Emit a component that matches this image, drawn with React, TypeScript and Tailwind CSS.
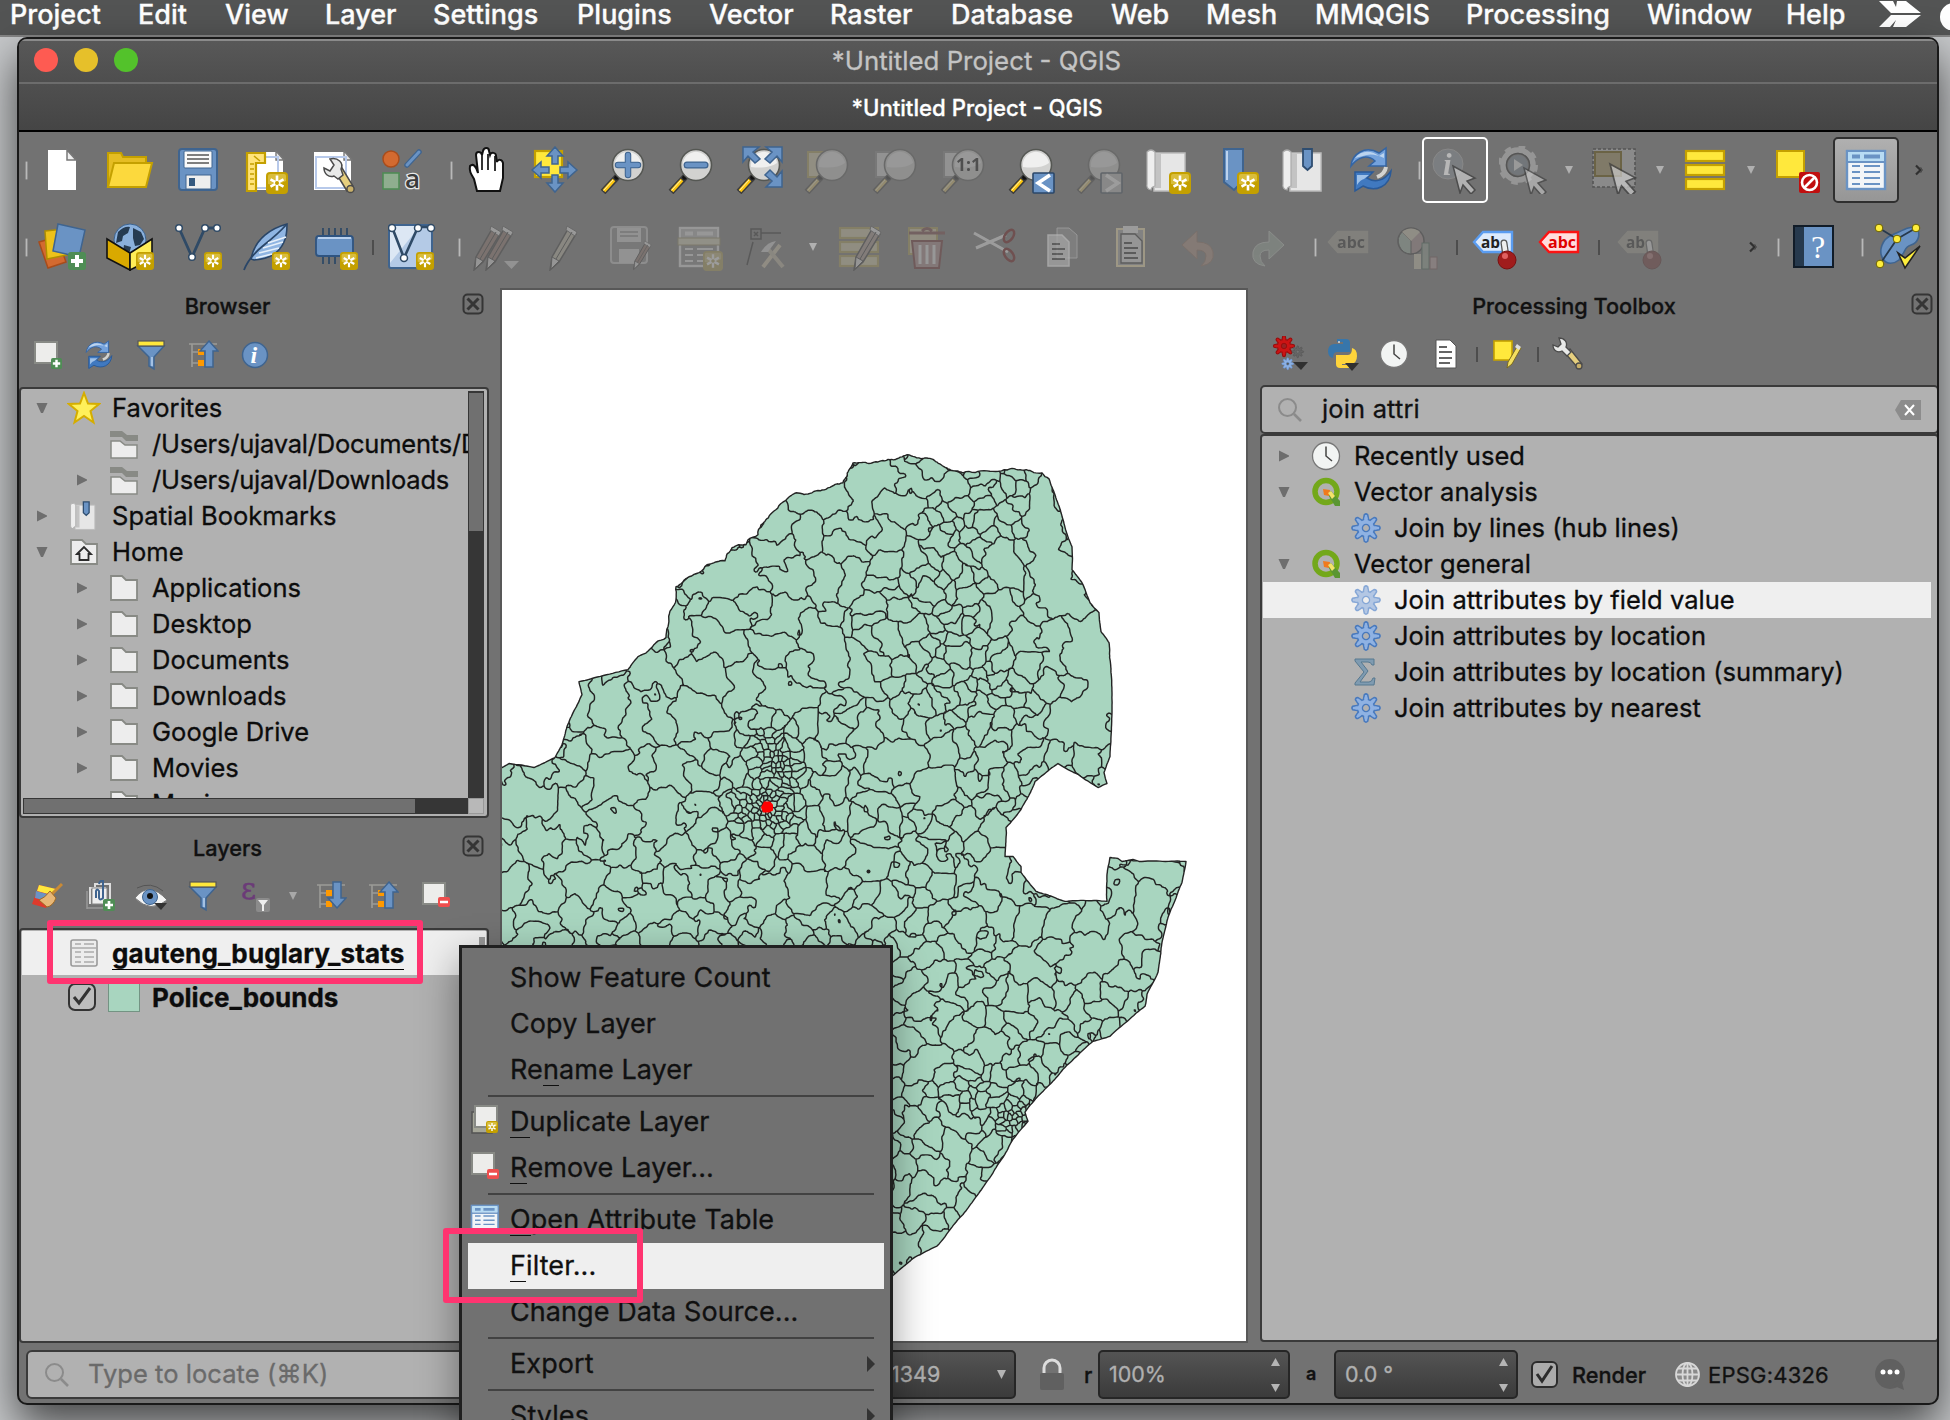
import React from "react";

/* ---------- Map geometry ---------- */

type Pt = [number, number];

function makeRng(seed: number) {
  let s = seed;
  return () => {
    s = (s + 0x6d2b79f5) | 0;
    let t = Math.imul(s ^ (s >>> 15), 1 | s);
    t = (t + Math.imul(t ^ (t >>> 7), 61 | t)) ^ t;
    return ((t ^ (t >>> 14)) >>> 0) / 4294967296;
  };
}

const coast: Pt[] = [
  [490, 770], [502, 768], [509, 764], [534, 768], [555, 758], [562, 745], [567, 727], [582, 695], [579, 682], [628, 670], [638, 657],
  [656, 643], [666, 638], [668, 627], [673, 607], [676, 587], [689, 577], [707, 565], [725, 561], [732, 548], [746, 545],
  [748, 540], [758, 535], [761, 525], [770, 515], [785, 501], [796, 493], [812, 493], [828, 488], [843, 483], [849, 470],
  [853, 463], [881, 461], [909, 455], [925, 458], [948, 469], [963, 473], [987, 471], [1010, 469], [1042, 473], [1049, 479],
  [1061, 513], [1072, 547], [1072, 570], [1082, 583], [1090, 603], [1099, 613], [1101, 632], [1109, 643], [1111, 673],
  [1112, 713], [1111, 737], [1110, 757], [1104, 773], [1107, 784], [1098, 788], [1058, 764], [1035, 782], [1021, 810],
  [1006, 828], [1005, 857], [1013, 857], [1021, 867], [1021, 873], [1036, 892], [1065, 902], [1107, 902], [1107, 875], [1110, 858],
  [1118, 859], [1122, 862], [1133, 860], [1139, 862], [1186, 862], [1182, 883], [1168, 918], [1162, 943], [1158, 973], [1147, 995],
  [1145, 1007], [1110, 1037], [1093, 1042], [1063, 1070], [1040, 1095], [1025, 1113], [1028, 1122], [1013, 1140],
  [995, 1170], [973, 1202], [952, 1228], [937, 1247], [915, 1258], [892, 1277], [860, 1290], [490, 1290],
];

/* Hand-placed districts: each group of points forms one district. */
const districts: Pt[][] = [
  [[862, 475], [868, 492], [858, 508], [889, 478]], [[910, 470], [927, 483], [945, 490], [915, 490], [955, 482]],
  [[1040, 485], [1040, 500], [1036, 520], [1052, 520], [1034, 540], [1055, 545], [1042, 560], [1060, 570], [1048, 590], [1070, 590], [1056, 606], [1080, 606], [1048, 573]],
  [[892, 505], [905, 515], [916, 505]], [[800, 500], [818, 498], [834, 494]], [[776, 515], [772, 532]], [[806, 522], [810, 540], [812, 552]],
  [[840, 525], [862, 528]], [[725, 568], [700, 580], [745, 560], [738, 585], [715, 592], [752, 582]], [[765, 553], [785, 555]],
  [[775, 575], [797, 573], [778, 590], [795, 588]], [[821, 570], [830, 585], [824, 594]], [[855, 578], [848, 590], [857, 562]],
  [[838, 548], [858, 550]], [[880, 565], [890, 560]], [[995, 555], [1010, 562], [1000, 578], [1014, 580], [1003, 548]],
  [[884, 535], [890, 545]], [[678, 615], [682, 632], [680, 645]], [[704, 632], [720, 640], [706, 650], [734, 645]],
  [[775, 605], [795, 608], [770, 620], [790, 625]], [[720, 612], [738, 618]], [[765, 640], [785, 645], [778, 655]],
  [[808, 625], [818, 640], [828, 655], [835, 675], [820, 662]], [[645, 660], [655, 672], [642, 680], [665, 680]],
  [[690, 662], [708, 668], [715, 683], [700, 682]], [[740, 672], [748, 688], [742, 700]], [[775, 680], [792, 692], [808, 700], [785, 705]],
  [[855, 655], [862, 672], [868, 688], [852, 668]], [[602, 690], [618, 690], [605, 710], [620, 712]], [[583, 692], [582, 712]],
  [[639, 695], [638, 715], [640, 735]], [[661, 705], [664, 722]], [[685, 705], [700, 712], [712, 718], [690, 722]],
  [[1095, 630], [1080, 630], [1085, 650], [1100, 655], [1098, 675], [1082, 668], [1100, 695], [1085, 705], [1098, 715], [1070, 715], [1060, 718], [1085, 725], [1065, 735], [1098, 738]],
  [[1050, 625], [1045, 640], [1056, 640], [1050, 660]], [[995, 600], [1005, 612], [998, 625]], [[1020, 630], [1030, 645], [1018, 645]],
  [[880, 715], [895, 722], [900, 732]], [[885, 750], [905, 748], [910, 765], [893, 770]], [[920, 785], [938, 785], [930, 800]],
  [[605, 775], [620, 770], [600, 795], [630, 785]], [[668, 765], [680, 758], [662, 778], [682, 782]],
  [[512, 792], [530, 792], [540, 800], [510, 808]], [[566, 812], [574, 824], [560, 830]], [[612, 815], [612, 835], [628, 822]],
  [[648, 800], [668, 802], [650, 825], [665, 830]], [[530, 840], [548, 838], [535, 855]], [[575, 875], [592, 872], [575, 890], [592, 890]],
  [[535, 880], [538, 897], [550, 900]], [[535, 918], [555, 920]], [[632, 905], [655, 905], [640, 920]], [[755, 890], [770, 888], [762, 908]],
  [[800, 880], [815, 878], [805, 900], [822, 895]], [[866, 862], [880, 862], [874, 875]], [[985, 870], [1000, 868], [998, 885], [1012, 890]],
  [[1145, 870], [1160, 870], [1172, 876]], [[1120, 878], [1118, 898]], [[1148, 898], [1158, 910], [1150, 925]], [[1122, 925], [1110, 945], [1085, 950], [1078, 965], [1098, 960]],
  [[1050, 925], [1060, 922]], [[1030, 960], [1040, 968], [1018, 962]], [[930, 1065], [945, 1058], [918, 1073]], [[988, 1045], [995, 1055]],
  [[948, 1120], [962, 1125]], [[950, 1145], [960, 1155], [962, 1165]], [[925, 1190], [945, 1188]], [[897, 1240], [910, 1245], [900, 1258]],
];

const hubs: [number, number, number, number][] = [
  [768, 808, 3.7, 0.34], [766, 746, 5.5, 0.6], [782, 764, 4.2, 0.8], [1018, 1121, 3.3, 0.45], [968, 1095, 8, 0.6], [745, 812, 5.5, 0.9],
];

function spacing(x: number, y: number) {
  let r = 18.5;
  if (x < 700) r = 22;
  if (y > 1040) r = 15.5;
  if (x > 930 && x < 1030 && y < 730) r = 12.5;
  if (x > 850 && x <= 930 && y > 560 && y < 730) r = 15;
  for (const [hx, hy, min, grow] of hubs) {
    const d = Math.hypot((x - hx) * 1.1, y - hy);
    r = Math.min(r, min + Math.max(0, d - 15) * grow);
  }
  return r;
}

function hash(ix: number, iy: number, k: number) {
  let h = Math.imul(ix, 374761393) ^ Math.imul(iy, 668265263) ^ Math.imul(k, 974634777);
  h = Math.imul(h ^ (h >>> 13), 1274126177);
  return ((h ^ (h >>> 16)) >>> 0) / 4294967296 - 0.5;
}

function noise(x: number, y: number, size: number, k: number) {
  const u = x / size;
  const v = y / size;
  const i = Math.floor(u);
  const j = Math.floor(v);
  const a = u - i;
  const b = v - j;
  const sx = a * a * (3 - 2 * a);
  const sy = b * b * (3 - 2 * b);
  const top = hash(i, j, k) * (1 - sx) + hash(i + 1, j, k) * sx;
  const bottom = hash(i, j + 1, k) * (1 - sx) + hash(i + 1, j + 1, k) * sx;
  return top * (1 - sy) + bottom * sy;
}

const fmt = (p: Pt) => p[0].toFixed(1) + " " + p[1].toFixed(1);

function wobble(a: Pt, b: Pt, rnd: () => number, amp: number): Pt[] {
  const len = Math.hypot(b[0] - a[0], b[1] - a[1]);
  if (len < 3.2) return [b];
  const k = (rnd() - 0.5) * amp;
  const m: Pt = [(a[0] + b[0]) / 2 - (b[1] - a[1]) * k, (a[1] + b[1]) / 2 + (b[0] - a[0]) * k];
  return [...wobble(a, m, rnd, amp), ...wobble(m, b, rnd, amp)];
}

const X0 = 494;
const Y0 = 446;
const STEP = 2;
const COLS = 352;
const ROWS = 428;
const BUCKET = 40;

function buildMesh() {
  const rnd = makeRng(4326);
  const sites: { x: number; y: number; g: number; w: number; big: boolean }[] = [];
  const buckets = new Map<number, number[]>();
  const key = (x: number, y: number) => Math.floor(x / BUCKET) * 1000 + Math.floor(y / BUCKET);
  const add = (x: number, y: number, g: number, w: number, big: boolean) => {
    const k = key(x, y);
    buckets.set(k, [...(buckets.get(k) ?? []), sites.length]);
    sites.push({ x, y, g, w, big });
  };
  const around = (x: number, y: number) => {
    const out: number[] = [];
    for (let a = -1; a <= 1; a++) for (let b = -1; b <= 1; b++) out.push(...(buckets.get(key(x + a * BUCKET, y + b * BUCKET)) ?? []));
    return out;
  };
  districts.forEach((d, g) => d.forEach(([x, y]) => add(x, y, g, 1, true)));
  for (let i = 0; i < 24000; i++) {
    const h = hubs[i % hubs.length];
    const local = i % 4 === 0;
    const x = local ? h[0] + (rnd() - 0.5) * 70 : 490 + rnd() * 710;
    const y = local ? h[1] + (rnd() - 0.5) * 70 : 440 + rnd() * 870;
    const r = spacing(x, y);
    const ok = around(x, y).every((n) => {
      const s = sites[n];
      const q = s.big ? Math.min(20, r * 1.2) : r;
      return (s.x - x) ** 2 + (s.y - y) ** 2 >= q * q;
    });
    if (ok) add(x, y, 1000 + i, r > 10 ? 0.78 + rnd() * 0.5 : 1, false);
  }

  const cache = new Map<number, number[]>();
  const label = new Int32Array(COLS * ROWS);
  for (let j = 0; j < ROWS; j++) {
    for (let i = 0; i < COLS; i++) {
      const x = X0 + (i + 0.5) * STEP;
      const y = Y0 + (j + 0.5) * STEP;
      const k = Math.min(1, spacing(x, y) / 18);
      const wx = x + k * (noise(x, y, 14, 1) * 18 + noise(x, y, 5, 2) * 6);
      const wy = y + k * (noise(x, y, 14, 3) * 18 + noise(x, y, 5, 4) * 6);
      const b = key(wx, wy);
      let list = cache.get(b);
      if (!list) {
        list = around(wx, wy);
        cache.set(b, list);
      }
      let best = 1e9;
      let g = -1;
      for (const n of list) {
        const s = sites[n];
        const d = ((s.x - wx) ** 2 + (s.y - wy) ** 2) * s.w * s.w;
        if (d < best) {
          best = d;
          g = s.g;
        }
      }
      label[j * COLS + i] = g;
    }
  }

  /* Borders run along the lattice between differing cells, then relax into soft lines. */
  const W = COLS + 1;
  const links = new Map<number, number[]>();
  const edges: [number, number][] = [];
  const join = (a: number, b: number) => {
    edges.push([a, b]);
    (links.get(a) ?? links.set(a, []).get(a)!).push(b);
    (links.get(b) ?? links.set(b, []).get(b)!).push(a);
  };
  for (let j = 0; j < ROWS; j++) {
    for (let i = 0; i < COLS; i++) {
      const c = label[j * COLS + i];
      if (i + 1 < COLS && label[j * COLS + i + 1] !== c) join(j * W + i + 1, (j + 1) * W + i + 1);
      if (j + 1 < ROWS && label[(j + 1) * COLS + i] !== c) join((j + 1) * W + i, (j + 1) * W + i + 1);
    }
  }
  let pos = new Map<number, Pt>();
  links.forEach((_, v) => pos.set(v, [X0 + (v % W) * STEP + hash(v, 7, 1) * 2, Y0 + Math.floor(v / W) * STEP + hash(v, 9, 2) * 2]));
  for (let n = 0; n < 2; n++) {
    const next = new Map<number, Pt>();
    links.forEach((ns, v) => {
      const p = pos.get(v)!;
      let sx = 0;
      let sy = 0;
      ns.forEach((o) => {
        sx += pos.get(o)![0];
        sy += pos.get(o)![1];
      });
      next.set(v, [p[0] * 0.6 + (sx / ns.length) * 0.4, p[1] * 0.6 + (sy / ns.length) * 0.4]);
    });
    pos = next;
  }
  const path = edges.map(([a, b]) => "M" + fmt(pos.get(a)!) + "L" + fmt(pos.get(b)!)).join("");

  const crng = makeRng(11);
  let edge = "M" + fmt(coast[0]);
  coast.forEach((p, i) => {
    const n = coast[(i + 1) % coast.length];
    const rough = i > 9 && i < 40 ? 0.22 : 0.05;
    edge += "L" + wobble(p, n, crng, rough).map(fmt).join(" ");
  });
  return { path, edge: edge + "Z" };
}

const mesh = buildMesh();

function MapCanvas() {
  return (
    <svg className="block h-full w-full" viewBox="502 290 744 1052" preserveAspectRatio="none">
      <clipPath id="land"><path d={mesh.edge} /></clipPath>
      <path d={mesh.edge} fill="#a8d5bf" />
      <g clipPath="url(#land)">
        <path d={mesh.path} fill="none" stroke="#232323" strokeWidth="1.45" strokeLinecap="round" />
      </g>
      <path d={mesh.edge} fill="none" stroke="#232323" strokeWidth="1.4" strokeLinejoin="round" />
      <path d="M764 802h6l3 3v6l-4 2h-6l-2-5z" fill="#f00" />
      <circle cx="868.500" cy="872" r="2" fill="#232323" />
    </svg>
  );
}

/* ---------- Icon helpers ---------- */

type IconProps = { children: React.ReactNode; s?: number; dim?: boolean };

function Icon({ children, s = 48, dim }: IconProps) {
  return (
    <svg width={s} height={s} viewBox={`0 0 ${s} ${s}`} className={dim ? "shrink-0 opacity-30 saturate-50" : "shrink-0"} fill="none">
      {children}
    </svg>
  );
}

const Badge = ({ x = 24, y = 26, s = 22 }: { x?: number; y?: number; s?: number }) => (
  <g transform={`translate(${x} ${y}) scale(${s / 22})`}>
    <rect width="22" height="22" rx="4" fill="#c4a000" />
    <path d="M2 4a2 2 0 0 1 2-2h14a2 2 0 0 1 2 2v5q-9 5-18 3z" fill="#d9bd3c" />
    <path d="M11 3.500v15M4.500 7.300l13 7.400M17.500 7.300l-13 7.400" stroke="#fff" strokeWidth="2.600" />
    <circle cx="11" cy="11" r="2" fill="#c4a000" />
  </g>
);

const Plus = ({ x, y, s = 18 }: { x: number; y: number; s?: number }) => (
  <g transform={`translate(${x} ${y}) scale(${s / 18})`}>
    <rect width="18" height="18" rx="3" fill="#4f8d55" />
    <path d="M9 3v12M3 9h12" stroke="#fff" strokeWidth="4" />
  </g>
);

const Minus = ({ x, y }: { x: number; y: number }) => (
  <g transform={`translate(${x} ${y})`}>
    <rect width="12" height="10" rx="2" fill="#ef4e4e" />
    <path d="M2 5h8" stroke="#fff" strokeWidth="2.500" />
  </g>
);

const Lens = () => (
  <>
    <path d="M19 30L4 46" stroke="#3b3b3b" strokeWidth="6.500" />
    <path d="M15 34L5 45" stroke="#fcc50f" strokeWidth="3.600" />
    <path d="M14 34L4.500 44.500" stroke="#fff3b0" strokeWidth="1" />
    <circle cx="17.500" cy="31.500" r="2.300" fill="#111" />
    <circle cx="29" cy="19" r="15.500" fill="#d2d2d0" stroke="#555753" strokeWidth="1.600" />
    <path d="M16 21a13 13 0 0 1 26-4q-8 6-26 4z" fill="#f0f0ef" />
  </>
);

const Cursor = ({ x = 24, y = 20 }: { x?: number; y?: number }) => (
  <path transform={`translate(${x} ${y})`} d="M0 0l22 12-8 3 8 9-4 4-8-9-3 8z" fill="#ccc" stroke="#3c3c3c" strokeWidth="1.500" />
);

const Cycle = () => (
  <g>
    <path d="M4 20C5 8 18-1 32 7l7-5v18H22l6-5C20 8 11 11 4 20z" fill="#74a2dc" stroke="#3465a4" strokeWidth="1.500" />
    <path d="M8 12C14 4 24 4 32 10l5-3v5q-12-6-21-2z" fill="#bcd4ee" />
    <path d="M44 25c-1 15-15 22-28 15l-8 5V26h18l-6 6c8 5 17 3 24-7z" fill="#4079c0" stroke="#2a5a98" strokeWidth="1.500" />
    <path d="M10 29h12l-5 4q-4 1-7 6z" fill="#9fc1e8" />
    <path d="M30 31q8-3 9-10" stroke="#d3d3d0" strokeWidth="4" />
  </g>
);

const Pencil = ({ x = 0, y = 0, c = "#b4a9a4" }: { x?: number; y?: number; c?: string }) => (
  <g transform={`translate(${x} ${y})`}>
    <path d="M25 6L9 34l-2 13 9-8L33 11z" fill={c} stroke="#333" strokeWidth="1.500" />
    <path d="M24 3l10 6-2 4-9-6z" fill="#f4f4f4" stroke="#555" />
    <path d="M9 34l7 4-8 8z" fill="#e8e8e8" stroke="#333" />
    <path d="M29 9L13 36" stroke="#2e2e2e" strokeWidth="1" />
  </g>
);

const Table = ({ head = "#b8dcf4", line = "#6a93c4", body = "#f2f5f8" }: { head?: string; line?: string; body?: string }) => (
  <>
    <rect x="5" y="5" width="38" height="38" fill={body} stroke={line} strokeWidth="2.400" />
    <rect x="6" y="6" width="36" height="9" fill={head} />
    <path d="M5 16h38" stroke={line} strokeWidth="2" />
    <path d="M10 10.500h8M22 10.500h16" stroke={line} strokeWidth="4" />
    <path d="M10 20h8M22 20h16M10 26h8M22 26h16M10 32h8M22 32h16M10 38h8M22 38h16" stroke={line} strokeWidth="2" />
  </>
);

const Globe = ({ cx, cy, r }: { cx: number; cy: number; r: number }) => (
  <g transform={`translate(${cx} ${cy}) scale(${r / 16})`}>
    <circle r="16" fill="#8ab0dc" stroke="#3c638f" />
    <path d="M-12-8q6-6 12-5l-2 6-5 3-1 5-6 2zM3-12l8 4 3 7-4 6-5 1-2-8zM-6 5l7 2-2 7-6-2z" fill="#253b52" />
  </g>
);

const Tag = ({ text, stroke, fill, color = "#222" }: { text: string; stroke: string; fill: string; color?: string }) => (
  <>
    <path d="M4 19L13 9h29v20H13z" fill={fill} stroke={stroke} strokeWidth="2.400" />
    <text x={text.length > 2 ? 12 : 11} y="24.500" fontFamily="Open Sans" fontWeight="700" fontSize="15.500" fill={color} textLength={text.length > 2 ? 28 : 19} lengthAdjust="spacingAndGlyphs">{text}</text>
  </>
);

const RedPin = () => (
  <>
    <path d="M34 20l2 14" stroke="#555" strokeWidth="7" strokeLinecap="round" />
    <path d="M34 20l2 13" stroke="#eee" strokeWidth="4.500" strokeLinecap="round" />
    <circle cx="37" cy="37" r="9" fill="#a01c1c" stroke="#7a1010" />
    <circle cx="35" cy="33" r="3" fill="#e06060" />
  </>
);

const Page = () => (
  <>
    <path d="M4 6h31l6 8v30H4z" fill="#fff" />
    <path d="M34 5v9h8z" fill="#e7e7e7" stroke="#777" strokeWidth="1.400" />
    <rect x="6" y="11" width="30" height="31" stroke="#b7c9ea" strokeWidth="2" />
  </>
);

const Wrench = () => (
  <>
    <path d="M24 25l12 17 6-5-13-17z" fill="#e6cf7e" stroke="#4b4b4b" strokeWidth="1.500" />
    <circle cx="40" cy="42" r="4" fill="#c9b069" stroke="#4b4b4b" strokeWidth="1.500" />
    <path d="M18 13l1 6-4 3-5-2c0 7 6 9 11 7l6 5 5-5-5-6c2-6-2-10-9-9z" fill="#e8e9e8" stroke="#4b4b4b" strokeWidth="1.500" />
  </>
);

const Scroll = () => (
  <>
    <path d="M11 7h31v38H11z" fill="#e6e6e6" stroke="#bcbcbc" strokeWidth="1.500" />
    <path d="M12 8h6v34h-6z" fill="#c3c3c3" />
    <path d="M4 6q4-4 8 0v34q-4 1-4 4-5-1-4-6z" fill="#eee" stroke="#aaa" strokeWidth="1.200" />
  </>
);

const Stack = ({ c = "#ffe83c", b = "#c4a000" }: { c?: string; b?: string }) => (
  <>
    {[5, 19, 33].map((y) => <rect key={y} x="5" y={y} width="38" height="10" fill={c} stroke={b} strokeWidth="2.200" />)}
  </>
);

const Gear = ({ fill = "#8fb2e3", stroke = "#4879bd", hole = "#b1b1b1" }: { fill?: string; stroke?: string; hole?: string }) => (
  <g transform="translate(16 16)">
    {[0, 45, 90, 135, 180, 225, 270, 315].map((a) => (
      <path key={a} transform={`rotate(${a})`} d="M-2.600-8.500l.9-4.800q1.700-1.600 3.400 0l.9 4.800z" fill={fill} stroke={stroke} strokeWidth="1.500" />
    ))}
    <circle r="8.600" fill={fill} stroke={stroke} strokeWidth="1.300" />
    {[0, 45, 90, 135, 180, 225, 270, 315].map((a) => (
      <path key={a} transform={`rotate(${a})`} d="M-2-6.500l.5-4h3l.5 4z" fill={fill} />
    ))}
    <circle r="3.600" fill={hole} stroke={stroke} strokeWidth="1.300" />
  </g>
);

/* ---------- Toolbars ---------- */

function Slot({ children, w = "w-[68px]" }: { children?: React.ReactNode; w?: string }) {
  return <div className={`${w} flex h-full shrink-0 items-center justify-center`}>{children}</div>;
}
function Grip({ w }: { w: string }) {
  return (
    <div className={`${w} flex h-full shrink-0 items-center justify-end`}>
      <span className="h-[19px] w-[3px] rounded-full border border-[#8f8f8f] bg-[#b9b9b9]" />
    </div>
  );
}
function Divider({ w }: { w: string }) {
  return <div className={`${w} flex h-full shrink-0 items-center justify-center`}><span className="h-[15px] w-[2px] bg-[#4d4d4d]" /></div>;
}
function Drop({ w }: { w: string }) {
  return (
    <div className={`${w} flex h-full shrink-0 items-center justify-center`}>
      <svg width="8" height="8" viewBox="0 0 8 8"><path d="M0 0h8L4 8z" fill="#b0b0b0" /></svg>
    </div>
  );
}
const More = () => (
  <svg width="8" height="12" viewBox="0 0 8 12" fill="none"><path d="M1 1.500l4.500 4.500L1 10.500" stroke="#303030" strokeWidth="2.200" /><path d="M5.500 3l2 3-2 3" stroke="#4a4a4a" strokeWidth="1" /></svg>
);

function TopToolbar() {
  return (
    <div className="flex h-[78px] items-center pb-[2px] pl-[1px]">
      <Grip w="w-[8px]" />
      <Slot><Icon><path d="M10 4h19l9 10v30H10z" fill="#fff" /><path d="M29 4v10h9z" fill="#efefef" stroke="#777" strokeWidth="1.500" /></Icon></Slot>
      <Slot><Icon><path d="M2 41V7h13l2 4h23v8" fill="#e5bd23" stroke="#c4a000" strokeWidth="2" /><path d="M8 17h38l-6 24H2z" fill="#fcd93d" stroke="#c4a000" strokeWidth="2" /></Icon></Slot>
      <Slot>
        <Icon>
          <rect x="5" y="3" width="38" height="41" rx="3" fill="#6a93c4" stroke="#3f648f" strokeWidth="2" />
          <rect x="10" y="5" width="28" height="17" rx="1" fill="#fafafa" stroke="#3f648f" /><path d="M13 9h22M13 13h22M13 17h22" stroke="#555" strokeWidth="1.600" />
          <rect x="12" y="29" width="25" height="14" fill="#eee" stroke="#3f648f" /><rect x="15" y="32" width="6" height="8" fill="#34597f" />
        </Icon>
      </Slot>
      <Slot><Icon><Page /><path d="M5 7h18v10h-9v28H5z" fill="#ffe37a" stroke="#c4a000" strokeWidth="2.200" /><path d="M8 18h4M8 23h4M8 28h4M8 33h4M8 38h4M12 10l6 5" stroke="#c4a000" strokeWidth="1.500" /><Badge /></Icon></Slot>
      <Slot>
        <Icon>
          <Page />
          <path d="M26 27l11 18 6-5-11-18z" fill="#e6cf7e" stroke="#4b4b4b" strokeWidth="1.500" /><circle cx="40.500" cy="43" r="3.600" fill="#c9b069" stroke="#4b4b4b" strokeWidth="1.500" />
          <path d="M20 13l4 6-4 6-6-3c0 6 5 10 10 8l4 3 5-4-2-6c3-6-3-12-11-10z" fill="#e8e9e8" stroke="#4b4b4b" strokeWidth="1.500" />
        </Icon>
      </Slot>
      <Slot>
        <Icon>
          <circle cx="13" cy="13" r="8" fill="#d36a30" stroke="#a84c1b" strokeWidth="1.500" /><path d="M29 19L41 6" stroke="#3f648f" strokeWidth="5.500" strokeLinecap="round" /><path d="M29 19L41 6" stroke="#6a93c4" strokeWidth="3" strokeLinecap="round" />
          <rect x="5" y="27" width="16" height="16" fill="#8fae8f" stroke="#4f8d55" strokeWidth="1.600" />
          <text x="27" y="42" fontFamily="Open Sans" fontSize="26" fontWeight="600" fill="#3b3b3b" stroke="#e8e8e8" strokeWidth="2.500" paintOrder="stroke">a</text>
        </Icon>
      </Slot>
      <Grip w="w-[17px]" />
      <Slot>
        <Icon>
          <path d="M11 45L8 33C5 28 3 25 4 20c3-3 6 0 8 7L10 9c0-4 5-4 6 0l1-4c1-4 6-4 6 0l1 4c1-3 6-3 6 1l1 6c1-3 5-3 6 1v15L34 45z" transform="translate(3)" fill="#fff" stroke="#111" strokeWidth="2" />
          <path d="M19 9v15M25 8v16M32 10v15" stroke="#111" strokeWidth="1.700" />
        </Icon>
      </Slot>
      <Slot>
        <Icon>
          <rect x="4" y="5" width="27" height="26" fill="#ffe83c" stroke="#c4a000" strokeWidth="2.200" />
          <path d="M24 1l8 9h-5v8h-6v-8h-5zM24 46l8-9h-5v-8h-6v8h-5zM1 24l9-8v5h8v6h-8v5zM46 24l-9-8v5h-8v6h8v5z" fill="#6a93c4" stroke="#3f648f" strokeWidth="1.500" />
        </Icon>
      </Slot>
      <Slot><Icon><Lens /><path d="M29 9v20M19 19h20" stroke="#3f648f" strokeWidth="6.500" strokeLinecap="round" /><path d="M29 9v20M19 19h20" stroke="#6a93c4" strokeWidth="4.500" strokeLinecap="round" /></Icon></Slot>
      <Slot><Icon><Lens /><path d="M20 19h18" stroke="#3f648f" strokeWidth="7" strokeLinecap="round" /><path d="M20 19h18" stroke="#6a93c4" strokeWidth="4.500" strokeLinecap="round" /></Icon></Slot>
      <Slot>
        <Icon>
          <Lens />
          <path d="M8 1h16l-6 5 7 7-5 4-7-7-5 6zM47 1H31l6 5-7 7 5 4 7-7 5 6zM47 41H31l6-6-7-6 5-5 7 7 5-6z" fill="#6a93c4" stroke="#3f648f" strokeWidth="1.500" />
        </Icon>
      </Slot>
      <Slot><Icon dim><rect x="5" y="6" width="22" height="25" fill="#e5cf80" stroke="#c4a000" strokeWidth="2" /><Lens /></Icon></Slot>
      <Slot><Icon dim><rect x="5" y="6" width="22" height="25" fill="#ddd" stroke="#888" strokeWidth="2" /><Lens /></Icon></Slot>
      <Slot><Icon dim><rect x="5" y="6" width="22" height="25" fill="#ddd" stroke="#888" strokeWidth="2" /><Lens /><text x="17" y="25" fontFamily="Open Sans" fontWeight="700" fontSize="17" fill="#000" textLength="25" lengthAdjust="spacingAndGlyphs">1:1</text></Icon></Slot>
      <Slot><Icon><Lens /><rect x="26" y="27" width="21" height="20" rx="1" fill="#6a93c4" stroke="#2b4768" strokeWidth="1.600" /><path d="M43 29l-12 8 12 8" stroke="#fff" strokeWidth="3.500" /></Icon></Slot>
      <Slot><Icon dim><Lens /><rect x="26" y="27" width="21" height="20" rx="1" fill="#bbb" stroke="#2b4768" strokeWidth="1.600" /><path d="M31 29l12 8-12 8" stroke="#fff" strokeWidth="3.500" /></Icon></Slot>
      <Slot><Icon><Scroll /><Badge x={26} /></Icon></Slot>
      <Slot><Icon><path d="M13 3h19v32l-9 9-10-8z" fill="#6a93c4" stroke="#3f648f" strokeWidth="2" /><path d="M16 5v29" stroke="#bcd3ee" strokeWidth="2" /><Badge x={26} /></Icon></Slot>
      <Slot><Icon><Scroll /><path d="M24 3h9v17l-4.500 4-4.500-4z" fill="#6a93c4" stroke="#2e4d70" strokeWidth="1.800" /></Icon></Slot>
      <Slot><Icon><Cycle /></Icon></Slot>
      <Grip w="w-[16px]" />
      <Slot>
        <div className="flex h-[66px] w-[66px] items-center justify-center rounded-[5px] border-2 border-white">
          <Icon><g opacity="0.55"><circle cx="17" cy="18" r="15" fill="#84898e" stroke="#999" /><text x="12" y="29" fontFamily="Liberation Serif" fontStyle="italic" fontWeight="700" fontSize="31" fill="#f0f0f0">i</text></g><g opacity="0.7"><Cursor x={22} y={20} /></g></Icon>
        </div>
      </Slot>
      <Slot>
        <Icon>
          <g opacity="0.45"><circle cx="19" cy="19" r="15" stroke="#c0c0c0" strokeWidth="5.500" /><circle cx="19" cy="19" r="18" stroke="#c0c0c0" strokeWidth="4" strokeDasharray="6.500 7.640" /><circle cx="19" cy="19" r="11.500" stroke="#333" strokeWidth="1.500" /></g>
          <circle cx="19" cy="19" r="10" fill="#72767a" /><path d="M15 13l9 6-9 6z" fill="#999" /><g opacity="0.6"><Cursor x={25} y={22} /></g>
        </Icon>
      </Slot>
      <Drop w="w-[23px]" />
      <Slot><Icon><rect x="3" y="3" width="42" height="38" fill="#8a8a8a" stroke="#555" strokeWidth="1.600" strokeDasharray="3 2" /><rect x="5" y="6" width="26" height="24" fill="#807a68" stroke="#6b6345" strokeWidth="2" /><g opacity="0.7" transform="translate(20 18) scale(1.15)"><Cursor x={0} y={0} /></g></Icon></Slot>
      <Drop w="w-[23px]" />
      <Slot><Icon><Stack /></Icon></Slot>
      <Drop w="w-[23px]" />
      <Slot w="w-[70px]"><Icon><rect x="4" y="5" width="27" height="26" fill="#ffe83c" stroke="#c4a000" strokeWidth="2" /><rect x="26" y="26" width="21" height="21" rx="2" fill="#c00f0f" /><circle cx="36.500" cy="36.500" r="7.500" stroke="#fff" strokeWidth="2.600" /><path d="M42 31l-11 11" stroke="#fff" strokeWidth="2.600" /></Icon></Slot>
      <Slot>
        <div className="flex h-[66px] w-[66px] items-center justify-center rounded-[5px] border-2 border-[#2f2f2f] bg-linear-to-b from-[#b0b0b0] to-[#969696]"><Icon><Table /></Icon></div>
      </Slot>
      <Slot w="w-[38px]"><More /></Slot>
    </div>
  );
}

function SecondToolbar() {
  return (
    <div className="flex h-[79px] items-center pb-[5px] pl-[1px]">
      <Grip w="w-[8px]" />
      <Slot><Icon><path d="M1 19l18-5 9 25-18 6z" fill="#d36a30" stroke="#a84c1b" strokeWidth="1.500" /><path d="M7 8l20-2 2 26-20 4z" fill="#edc21a" stroke="#b08f00" strokeWidth="1.500" /><path d="M20 1l27 6-6 27-26-6z" fill="#6a93c4" stroke="#3f648f" strokeWidth="1.500" /><Plus x={30} y={29} /></Icon></Slot>
      <Slot><Icon><Globe cx={24} cy={17} r={16} /><path d="M1 16l23 14v17L1 35z" fill="#d9a900" stroke="#111" strokeWidth="1.600" /><path d="M24 30l22-14v20L24 47z" fill="#ffee58" stroke="#111" strokeWidth="1.600" /><Badge x={30} y={29} s={18} /></Icon></Slot>
      <Slot><Icon><path d="M5 5l13 29L31 5h12" stroke="#2f4a66" strokeWidth="2.800" />{[[5, 5], [18, 34], [31, 5], [43, 5]].map(([x, y]) => <circle key={x} cx={x} cy={y} r="3.300" fill="#fff" stroke="#2f4a66" strokeWidth="1.500" />)}<Badge x={30} y={29} s={18} /></Icon></Slot>
      <Slot><Icon><path d="M45 1C30 5 13 15 9 36l3 1c14-1 25-6 30-18 3-6 3-12 3-18z" fill="#8fb5e2" stroke="#2a4668" strokeWidth="1.600" /><path d="M2 47Q7 34 22 22T44 2" stroke="#2a4668" strokeWidth="1.800" /><path d="M14 35l16-4M17 30l20-5M21 25l20-6M26 20l18-6" stroke="#e6f0fa" strokeWidth="1.600" /><Badge x={30} y={29} s={18} /></Icon></Slot>
      <Slot><Icon><path d="M13 5v36M19 5v36M25 5v36M31 5v36M37 5v36" stroke="#2f4a66" strokeWidth="1.800" /><rect x="6" y="13" width="37" height="20" rx="3" fill="#6a93c4" stroke="#2f5480" strokeWidth="1.800" /><path d="M8 15h33" stroke="#b9d1ee" strokeWidth="2" /><Badge x={30} y={29} s={18} /></Icon></Slot>
      <Divider w="w-[10px]" />
      <Slot><Icon><rect x="1" y="2" width="43" height="43" rx="2" fill="#b4cae6" stroke="#3f648f" strokeWidth="2" /><path d="M2 3h30L2 40z" fill="#dce7f4" /><path d="M4 4l12 31L30 4h12" stroke="#2f4a66" strokeWidth="2.600" />{[[4, 5], [16, 35], [30, 5], [43, 5]].map(([x, y]) => <circle key={x} cx={x} cy={y} r="3.500" fill="#fff" stroke="#2f4a66" strokeWidth="1.500" />)}<Badge x={28} y={29} s={18} /></Icon></Slot>
      <Grip w="w-[15px]" />
      <Slot><Icon dim><Pencil x={-4} c="#a8705c" /><Pencil x={8} c="#a8705c" /><path d="M33 38h15l-7.500 8z" fill="#ddd" /></Icon></Slot>
      <Slot><Icon dim><Pencil x={4} c="#c4bc90" /></Icon></Slot>
      <Slot><Icon dim><rect x="4" y="4" width="36" height="36" rx="3" fill="#888" stroke="#ccc" strokeWidth="2" /><rect x="10" y="5" width="24" height="14" fill="#ddd" /><path d="M13 9h18M13 13h18" stroke="#555" /><rect x="12" y="26" width="20" height="14" fill="#ddd" /><g transform="translate(22 16) scale(.65)"><Pencil c="#a8705c" /></g></Icon></Slot>
      <Slot><Icon dim><Table head="#bbb" line="#eee" body="#888" /><rect x="3" y="15" width="42" height="7" fill="#e0d7a0" stroke="#a08c30" /><Badge x={28} y={28} s={20} /></Icon></Slot>
      <Slot><Icon dim><path d="M8 6h10v10H8zM11 9l4 4M15 9l-4 4M18 10h20M10 19L4 42" stroke="#222" strokeWidth="1.500" /><path d="M20 44l17-22" stroke="#e0c890" strokeWidth="4" /><path d="M40 44L26 27" stroke="#c9b98a" strokeWidth="4" /><path d="M18 29q6-10 15-11l-8 11z" fill="#ddd" /></Icon></Slot>
      <Drop w="w-[24px]" />
      <Slot><Icon dim><Stack c="#e0cf80" b="#c4a000" /><Pencil x={12} y={0} c="#b89080" /></Icon></Slot>
      <Slot><Icon dim><rect x="6" y="5" width="28" height="26" fill="#e5cf80" stroke="#c4a000" strokeWidth="2" /><path d="M9 18h30l-3 27H12z" fill="#c88080" stroke="#a01818" strokeWidth="2" /><path d="M6 10h36M19 8q5-5 10 0" stroke="#a83030" strokeWidth="3" /><path d="M17 22v19M24 22v19M31 22v19" stroke="#eee" strokeWidth="3" /></Icon></Slot>
      <Slot><Icon><g opacity="0.4"><path d="M3 10l34 19M5 25l30-13" stroke="#ddd" strokeWidth="3" /><ellipse cx="38" cy="13" rx="7" ry="4" transform="rotate(-55 38 13)" stroke="#6c2020" strokeWidth="2.500" /><ellipse cx="38" cy="32" rx="7" ry="4" transform="rotate(55 38 32)" stroke="#6c2020" strokeWidth="2.500" /></g></Icon></Slot>
      <Slot><Icon><g opacity="0.5"><path d="M18 5h12l8 7v23H18z" fill="#8a8a8a" stroke="#bbb" /></g><g opacity="0.7"><path d="M9 12h14l7 7v24H9z" fill="#a6a6a6" stroke="#bbb" strokeWidth="1.500" /><path d="M13 21h8M13 26h13M13 31h11M13 36h13" stroke="#555" strokeWidth="2" /></g></Icon></Slot>
      <Slot><Icon><g opacity="0.75"><rect x="10" y="6" width="27" height="37" fill="#888" stroke="#aca48c" strokeWidth="2" /><rect x="16" y="3" width="15" height="7" fill="#aaa" /><path d="M14 11h14l7 7v22H14z" fill="#a2a2a2" stroke="#555" strokeWidth="1.300" /><path d="M17 20h8M17 25h14M17 30h12M17 35h14" stroke="#555" strokeWidth="2" /></g></Icon></Slot>
      <Slot><Icon dim><path d="M26 43q14-2 12-14-2-10-16-10V8L7 22l15 14v-9q9 0 9 6 0 6-5 10z" fill="#c98a68" stroke="#a64" /></Icon></Slot>
      <Slot><Icon dim><path d="M22 43q-14-2-12-14 2-10 16-10V8l15 14-15 14v-9q-9 0-9 6 0 6 5 10z" fill="#8fae95" stroke="#bcb" /></Icon></Slot>
      <Grip w="w-[16px]" />
      <Slot w="w-[64px]"><Icon dim><Tag text="abc" stroke="#aaa488" fill="#a9a488" /></Icon></Slot>
      <Slot w="w-[72px]"><Icon dim><circle cx="18" cy="18" r="13" fill="#b88" stroke="#333" strokeWidth="1.500" /><path d="M18 18V31A13 13 0 0 1 9 9z" fill="#8b9" stroke="#333" /><path d="M18 18L9 9a13 13 0 0 1 18 0z" fill="#dc9" /><rect x="21" y="31" width="7" height="15" fill="#dc9" /><rect x="29" y="20" width="7" height="26" fill="#8ca88c" stroke="#264" /><rect x="37" y="34" width="7" height="12" fill="#c99" stroke="#844" /></Icon></Slot>
      <Divider w="w-[8px]" />
      <Slot w="w-[66px]"><Icon><Tag text="ab" stroke="#5a9cf0" fill="#dceafc" /><RedPin /></Icon></Slot>
      <Slot w="w-[66px]"><Icon><Tag text="abc" stroke="#fb1313" fill="#ffdede" color="#e00000" /></Icon></Slot>
      <Divider w="w-[12px]" />
      <Slot><Icon dim><Tag text="ab" stroke="#aaa488" fill="#a9a488" /><RedPin /></Icon></Slot>
      <div className="flex flex-1 justify-end pr-[15px]"><More /></div>
      <Grip w="w-[8px]" />
      <Slot><Icon><rect x="4" y="3" width="39" height="41" fill="#6a93c4" stroke="#111c28" strokeWidth="2" /><rect x="5" y="4" width="9" height="39" fill="#26394d" /><text x="21" y="35" fontFamily="Liberation Serif" fontSize="32" fill="#fff">?</text></Icon></Slot>
      <Grip w="w-[16px]" />
      <Slot>
        <Icon>
          <path d="M9 36c-5-8-1-20 9-24 8-3 18-10 25-7 4 7 1 15-6 17-7 2-5 6-9 10l-3 5c-5 4-12 5-16-1z" fill="#6a93c4" stroke="#3f648f" strokeWidth="1.600" />
          <path d="M5 5l18 11L42 5M23 16L6 41" stroke="#26394d" strokeWidth="1.800" />
          {[[5, 5], [23, 16], [42, 5], [6, 41]].map(([x, y]) => <circle key={y + x} cx={x} cy={y} r="3.800" fill="#ffee3c" stroke="#6b6000" strokeWidth="1" />)}
          <path d="M24 30l7 5L46 23 31 45z" fill="#ffee3c" stroke="#222" strokeWidth="1.600" />
        </Icon>
      </Slot>
      <Slot w="w-[5px]" />
    </div>
  );
}

/* ---------- Small panel icons ---------- */

const Sheet = () => <rect x="4" y="3" width="22" height="21" fill="#ededeb" stroke="#888a85" strokeWidth="2" />;
const AddSheet = () => <Icon s={32}><Sheet /><Plus x={20} y={19} s={11} /></Icon>;
const RemoveSheet = () => <Icon s={32}><Sheet /><Minus x={19} y={17} /></Icon>;
const Refresh = () => <Icon s={32}><g transform="scale(.64) translate(1 1)"><Cycle /></g></Icon>;
const Funnel = () => <Icon s={32}><path d="M3 7h26L19 18v12l-5-3v-9z" fill="#6a93c4" stroke="#3f648f" strokeWidth="1.500" /><rect x="3" y="2" width="26" height="5" fill="#ffe83c" stroke="#555" strokeWidth="1.200" /><path d="M17 18v9" stroke="#b9d1ee" strokeWidth="1.500" /></Icon>;
const TreeUp = ({ down }: { down?: boolean }) => (
  <Icon s={32}>
    <path d="M2 5h28M5 5v23M5 13h8M5 24h8" stroke="#9c9c98" strokeWidth="1.600" />
    <rect x="11" y="10" width="6" height="6" fill="#f90" /><rect x="11" y="21" width="6" height="6" fill="#f90" />
    <g transform={down ? "matrix(1 0 0 -1 0 30)" : undefined}><path d="M22 2l9 10h-5v16h-8V12h-5z" fill="#6a93c4" stroke="#3f648f" strokeWidth="1.500" /></g>
  </Icon>
);
const Info = () => <Icon s={32}><circle cx="16" cy="16" r="12.500" fill="#6a93c4" stroke="#3f648f" strokeWidth="1.500" /><text x="11.500" y="24" fontFamily="Liberation Serif" fontStyle="italic" fontWeight="700" fontSize="24" fill="#fff">i</text></Icon>;
const Star = () => <Icon s={34}><path d="M17 2l4 10.500 11 .5-8.500 7 3 11.500L17 25l-9.500 6.500 3-11.500L2 13l11-.500z" fill="#fff05a" stroke="#d5ad00" strokeWidth="2" /></Icon>;
const FolderIcon = ({ home }: { home?: boolean }) => (
  <Icon s={32}>
    <path d="M3 28V4h11l4 4h11v20z" fill="#ededed" stroke="#888a85" strokeWidth="1.800" />
    {home && <path d="M9 18l7-7 7 7h-2.500v6h-9v-6z" stroke="#2b2b2b" strokeWidth="1.800" />}
  </Icon>
);
const LinkFolder = () => <Icon s={32}><path d="M2 3h12l5 4h11v6H18l-4-4H2z" fill="#888a85" /><path d="M3 30V13h9l5 4h12v13z" fill="#ededed" stroke="#888a85" strokeWidth="1.500" /></Icon>;
const BookIcon = () => <Icon s={32}><g transform="scale(.64) translate(0 1)"><Scroll /><path d="M24 2h9v17l-4.500 4-4.500-4z" fill="#6a93c4" stroke="#2e4d70" strokeWidth="2" /></g></Icon>;
const Clock = () => <Icon s={32}><circle cx="16" cy="16" r="13.500" fill="#f2f4f3" stroke="#777" strokeWidth="1.300" /><path d="M16 6.500V16l6 5" stroke="#444" strokeWidth="1.500" /></Icon>;
const QIcon = () => <Icon s={32}><circle cx="16" cy="15.500" r="11" stroke="#73a81a" strokeWidth="5.500" /><path d="M17 17l4-2 9 10v5h-5z" fill="#5a9632" /><path d="M13 13l7 1-1 6-5-1z" fill="#f07a1c" /><path d="M18 17l3-2 4 5-3 3z" fill="#f4e26a" /></Icon>;
const Sigma = () => <Icon s={32}><path d="M5 3h19v6h-2q-1-3-4-3h-7l7 9-8 11h9q3 0 4-4h2l-1 7H5v-2l9-11L5 5z" fill="#7f9bb1" stroke="#56788f" strokeWidth="1" /></Icon>;

const Search = () => <Icon s={28}><circle cx="11.500" cy="11.500" r="8.500" stroke="#8b8b8b" strokeWidth="2" /><path d="M18 18l7 7" stroke="#8b8b8b" strokeWidth="2.600" /></Icon>;

const CloseBox = () => (
  <svg width="22" height="22" viewBox="0 0 22 22" fill="none"><rect x="1.500" y="1.500" width="19" height="19" rx="4" stroke="#353535" strokeWidth="2" /><path d="M5.500 5.500l11 11M16.500 5.500l-11 11" stroke="#353535" strokeWidth="3" /></svg>
);

const Caret = ({ open }: { open?: boolean }) => (
  <svg width="12" height="12" viewBox="0 0 12 12">{open ? <path d="M.5 1h11L7 11H5z" fill="#6e6e6e" /> : <path d="M1 .5v11l10-5v-1z" fill="#6e6e6e" />}</svg>
);

/* ---------- Panels ---------- */

function TreeRow({ level, open, icon, label, selected, tight }: { level: number; open?: boolean; icon: React.ReactNode; label: string; selected?: boolean; tight?: boolean }) {
  return (
    <div className={`flex h-[36px] shrink-0 items-center whitespace-nowrap ${selected ? "bg-[#efefef]" : ""}`}>
      {level > 0 && <span className="w-[40px] shrink-0" />}
      <span className="flex w-[43px] shrink-0 items-center justify-center pr-[1px]">{open === undefined ? null : <Caret open={open} />}</span>
      <span className="flex w-[40px] shrink-0 items-center justify-center">{icon}</span>
      <span className={`pl-[8px] text-[25.500px] text-[#0c0c0c] ${tight ? "tracking-[-0.220px]" : "tracking-[0.030px]"}`}>{label}</span>
    </div>
  );
}

function PanelTitle({ title, cols }: { title: string; cols: string }) {
  return (
    <div className={`grid h-[34px] items-center ${cols}`}>
      <span className="text-center text-[21.700px] font-medium text-[#111]">{title}</span>
      <span className="flex justify-end pb-[4px]"><CloseBox /></span>
    </div>
  );
}

function Browser() {
  const homes = ["Applications", "Desktop", "Documents", "Downloads", "Google Drive", "Movies", "Music"];
  return (
    <section className="flex h-[529px] flex-col">
      <div className="w-[465px]"><PanelTitle title="Browser" cols="grid-cols-[1fr_48px]" /></div>
      <div className="flex h-[64px] items-center gap-[20px] pb-[1px] pl-[12px]"><AddSheet /><Refresh /><Funnel /><TreeUp /><Info /></div>
      <div className="grid h-[431px] w-[470px] grid-cols-[1fr_16px] grid-rows-[1fr_16px] rounded-[4px] border-2 border-[#3a3a3a] bg-[#b1b1b1] pr-[3px] pb-[2px]">
        <div className="flex flex-col overflow-hidden pt-[1px]">
          <TreeRow level={0} open icon={<Star />} label="Favorites" />
          <TreeRow level={1} icon={<LinkFolder />} label="/Users/ujaval/Documents/Data" tight />
          <TreeRow level={1} open={false} icon={<LinkFolder />} label="/Users/ujaval/Downloads" tight />
          <TreeRow level={0} open={false} icon={<BookIcon />} label="Spatial Bookmarks" />
          <TreeRow level={0} open icon={<FolderIcon home />} label="Home" />
          {homes.map((h) => <TreeRow key={h} level={1} open={false} icon={<FolderIcon />} label={h} />)}
        </div>
        <div className="mt-[2px] bg-[#363636] px-[1px]"><div className="mt-[2px] h-[138px] bg-[#707070]" /></div>
        <div className="ml-[2px] bg-[#363636] py-[1px]"><div className="ml-[1px] h-[14px] w-[391px] bg-[#707070]" /></div>
        <div className="border border-[#999] bg-[#b8b8b8]" />
      </div>
    </section>
  );
}

function Layers() {
  return (
    <section className="flex flex-1 flex-col">
      <div className="w-[465px] pt-[13px]"><PanelTitle title="Layers" cols="grid-cols-[1fr_48px]" /></div>
      <div className="flex h-[63px] items-center gap-[20px] pb-[2px] pl-[12px]">
        <Icon s={32}><path d="M8 5l17 4-10 19L1 24z" fill="#de3a2c" /><path d="M8 5l17 4-4 6-15-4z" fill="#ffe83c" /><path d="M5 11l15 4-4 6-12-3z" fill="#6a93c4" /><path d="M31 4L20 15" stroke="#c98a35" strokeWidth="3" /><path d="M19 11l6 7q-3 8-9 9l-8-7q6-2 11-9z" fill="#e7b777" stroke="#a36a22" /></Icon>
        <Icon s={32}><path d="M4 29V11M4 28h16" stroke="#999" strokeWidth="1.500" /><path d="M7 24V8h16M12 19V4h15v18" stroke="#ddd" strokeWidth="2" /><rect x="9" y="8" width="15" height="16" fill="#eee" stroke="#888" /><path d="M13 18V11q1-3 3 0v7q1 3 4 0V1q-3-1-4 3" stroke="#3f648f" strokeWidth="2" /><Plus x={20} y={19} s={12} /></Icon>
        <Icon s={32}><path d="M0 18q14-18 32 2-16 14-32-2z" fill="#f4f4f4" stroke="#777" /><path d="M2 8q14-7 26 3" stroke="#555" /><circle cx="15" cy="17" r="7.500" fill="#6a93c4" stroke="#3f648f" /><circle cx="15" cy="16" r="3" fill="#111" /><path d="M19 23h13l-6 7z" fill="#333" /></Icon>
        <Funnel />
        <Icon s={32}><text x="2" y="19" fontFamily="DejaVu Serif" fontSize="29" fill="#6b3b78" stroke="#6b3b78" strokeWidth="0.500">ε</text><rect x="17" y="18" width="14" height="14" rx="2" fill="#8b8b8b" /><path d="M19 20h10l-4 5v6h-2v-6z" fill="#eee" /></Icon>
        <span className="flex w-[4px] shrink-0 justify-center"><svg className="shrink-0" width="8" height="8" viewBox="0 0 8 8"><path d="M0 0h8L4 8z" fill="#a8a8a8" /></svg></span>
        <TreeUp down /><TreeUp /><RemoveSheet />
      </div>
      <div className="flex h-[415px] w-[470px] flex-col rounded-[4px] border-2 border-[#3a3a3a] bg-[#b1b1b1] p-[1px]">
        <div className="flex h-[44px] items-center bg-[#efefef]">
          <span className="ml-[42px] flex w-[40px] justify-center"><Icon s={32}><rect x="3" y="3" width="26" height="26" rx="2" fill="#ececec" stroke="#999" strokeWidth="1.600" /><path d="M7 7h6M16 7h10M3 11h26M7 15h6M16 15h10M7 20h6M16 20h10M7 25h6M16 25h10" stroke="#aaa" strokeWidth="1.500" /></Icon></span>
          <span className="pt-[3px] pl-[8px]"><span className="border-b-[1.500px] border-black text-[26px] leading-[25px] font-bold tracking-[0.130px] text-[#0c0c0c]">gauteng_buglary_stats</span></span>
          <span className="mt-[6px] mr-[1px] ml-auto h-[38px] w-[6px] bg-[#999]" />
        </div>
        <div className="flex h-[44px] items-center">
          <span className="ml-[46px] flex w-[40px] items-center">
            <svg width="28" height="28" viewBox="0 0 28 28" fill="none"><rect x="1" y="1" width="26" height="26" rx="6" fill="#bdbdbd" stroke="#333" strokeWidth="2" /><path d="M6 14l5 6L22 5" stroke="#333" strokeWidth="3" /></svg>
          </span>
          <span className="h-[30px] w-[32px] border-r border-b border-l border-[#739383] bg-[#a8d5bf]" />
          <span className="pl-[12px] text-[26px] font-bold text-[#0c0c0c]">Police_bounds</span>
        </div>
      </div>
    </section>
  );
}

function Toolbox() {
  return (
    <section className="flex w-[679px] shrink-0 flex-col">
      <div className="w-[673px]"><PanelTitle title="Processing Toolbox" cols="grid-cols-[1fr_45px]" /></div>
      <div className="flex h-[62px] items-center pl-[12px]">
        <Icon s={36}><g transform="translate(0 -2) scale(.75)"><Gear fill="#cc1414" stroke="#990c0c" hole="#992222" /></g><g transform="translate(19 9) scale(.42)"><Gear fill="#666" stroke="#555" hole="#777" /></g><g transform="translate(9 21) scale(.42)"><Gear stroke="#6a9be0" hole="#555" /></g><path d="M21 26h15l-7 8z" fill="#303030" /></Icon>
        <span className="w-[17px]" />
        <Icon s={36}><path d="M12 3h9q4 0 4 4v9H12q-4 0-4 6-5-1-5-7t6-7h9V6h-6z" fill="#3776ab" /><path d="M24 32h-9q-4 0-4-4v-9h12q4 0 4-7 5 1 5 8t-6 8h-9v1h7z" fill="#ffd43b" /><circle cx="14" cy="6" r="1" fill="#ddd" /><path d="M20 27h14l-7 8z" fill="#303030" /></Icon>
        <span className="w-[17px]" />
        <Clock />
        <span className="w-[20px]" />
        <Icon s={32}><path d="M6 2h14l6 6v22H6z" fill="#fff" stroke="#555" /><path d="M9 9h8M9 14h13M9 20h13M9 25h11" stroke="#333" strokeWidth="1.600" /></Icon>
        <Divider w="w-[30px]" />
        <Icon s={32}><rect x="2" y="3" width="18" height="19" fill="#ffe83c" stroke="#c4a000" strokeWidth="1.600" /><path d="M26 7L16 24l-1 6 5-4L29 10z" fill="#f3df60" stroke="#7a6a20" /><path d="M25 6l4 3-2 3-4-3z" fill="#ddd" /></Icon>
        <Divider w="w-[28px]" />
        <Icon s={34}><path d="M13 16l13 15 4-4-12-15z" fill="#e6cf7e" stroke="#4b4b4b" strokeWidth="1.300" /><circle cx="27" cy="29" r="3" fill="#c9b069" stroke="#4b4b4b" strokeWidth="1.300" /><path d="M7 1l2 6-3 3-5-2c0 6 5 8 9 6l5 5 4-4-5-5c2-5-2-9-7-9z" fill="#e8e9e8" stroke="#4b4b4b" strokeWidth="1.300" /></Icon>
      </div>
      <div className="flex h-[49px] items-center rounded-[5px] border-2 border-[#3a3a3a] bg-[#b1b1b1]">
        <span className="ml-[14px]"><Search /></span>
        <span className="ml-[18px] text-[25.500px] tracking-[0.150px] text-[#111]">join attri</span>
        <svg className="mr-[16px] ml-auto" width="26" height="20" viewBox="0 0 26 20" fill="none"><path d="M0 10L6 0h20v20H6z" fill="#8c8c8c" /><path d="M10 5l9 10M19 5l-9 10" stroke="#fff" strokeWidth="2" /></svg>
      </div>
      <div className="flex h-[908px] flex-col rounded-[4px] border-2 border-[#3a3a3a] bg-[#b1b1b1] pt-[2px] pr-[6px] pl-[1px]">
        <TreeRow level={0} open={false} icon={<Clock />} label="Recently used" />
        <TreeRow level={0} open icon={<QIcon />} label="Vector analysis" />
        <TreeRow level={1} icon={<Icon s={32}><Gear /></Icon>} label="Join by lines (hub lines)" />
        <TreeRow level={0} open icon={<QIcon />} label="Vector general" />
        <TreeRow level={1} selected icon={<Icon s={32}><Gear fill="#b3c7e4" stroke="#86a7d6" hole="#eee" /></Icon>} label="Join attributes by field value" />
        <TreeRow level={1} icon={<Icon s={32}><Gear /></Icon>} label="Join attributes by location" />
        <TreeRow level={1} icon={<Sigma />} label="Join attributes by location (summary)" />
        <TreeRow level={1} icon={<Icon s={32}><Gear /></Icon>} label="Join attributes by nearest" />
      </div>
    </section>
  );
}

/* ---------- Status bar ---------- */

const Spin = () => (
  <svg className="ml-auto" width="9" height="34" viewBox="0 0 9 34"><path d="M0 8L4.500 0 9 8zM0 26h9l-4.500 8z" fill="#b5b5b5" /></svg>
);

function StatusBar() {
  const field = "flex h-[49px] shrink-0 items-center rounded-[5px] border-2 border-[#262626] bg-linear-to-b from-[#545454] to-[#3b3b3b] text-[21.500px] text-[#b0b0b0]";
  return (
    <div className="flex h-[59px] items-start pt-[6px] pl-[1px]">
      <div className="ml-[6px] flex h-[49px] w-[440px] shrink-0 items-center rounded-[6px] border-2 border-[#3a3a3a] bg-[#b1b1b1]">
        <span className="ml-[15px]"><Search /></span>
        <span className="ml-[17px] text-[25.500px] tracking-[0.050px] text-[#6a6a6a]">Type to locate (⌘K)</span>
      </div>
      <div className={`${field} ml-[334px] w-[216px] pr-[8px] pl-[89px]`}>1349<svg className="ml-auto" width="9" height="9" viewBox="0 0 9 9"><path d="M0 0h9L4.500 9z" fill="#b5b5b5" /></svg></div>
      <svg className="mt-[8px] ml-[23px]" width="26" height="33" viewBox="0 0 26 33" fill="none"><path d="M5 16V10a8 8 0 0 1 16 0v6" stroke="#ddd" strokeWidth="3" /><rect x="1" y="15" width="24" height="17" rx="2" fill="#606060" /></svg>
      <span className="mt-[9px] w-[33px] shrink-0 pl-[19px] text-[21.500px] font-medium text-[#111]">r</span>
      <div className={`${field} w-[192px] pr-[8px] pl-[9px]`}>100%<Spin /></div>
      <span className="mt-[10px] w-[44px] shrink-0 pl-[16px] text-[18px] font-semibold text-[#111]">a</span>
      <div className={`${field} w-[184px] pr-[8px] pl-[9px]`}>0.0 °<Spin /></div>
      <svg className="mt-[11px] ml-[13px]" width="27" height="27" viewBox="0 0 27 27" fill="none"><rect x="1" y="1" width="25" height="25" rx="5" fill="#ababab" stroke="#2c2c2c" strokeWidth="2" /><path d="M6 13l5 7L21 5" stroke="#2c2c2c" strokeWidth="3" /></svg>
      <span className="mt-[9px] ml-[14px] text-[21.700px] font-medium text-[#111]">Render</span>
      <svg className="mt-[11px] ml-[28px] shrink-0" width="27" height="27" viewBox="0 0 27 27" fill="none" stroke="#d8d8d8" strokeWidth="1.800"><circle cx="13.500" cy="13.500" r="11.500" fill="#8a8a8a" /><ellipse cx="13.500" cy="13.500" rx="5" ry="11.500" /><path d="M13.500 2v23M2 13.500h23M4 7.500h19M4 19.500h19" /></svg>
      <span className="mt-[9px] ml-[7px] text-[22px] tracking-[0.200px] text-[#111]">EPSG:4326</span>
      <svg className="mt-[9px] mr-[30px] ml-auto shrink-0" width="33" height="32" viewBox="0 0 33 32"><circle cx="16" cy="15" r="15" fill="#606060" /><path d="M18 26l12 5-3-12z" fill="#606060" /><circle cx="9" cy="13" r="2.500" fill="#fff" /><circle cx="16" cy="13" r="2.500" fill="#fff" /><circle cx="23" cy="13" r="2.500" fill="#fff" /></svg>
    </div>
  );
}

/* ---------- Context menu ---------- */

function Item({ pre = "", accel = "", post, icon, sub, active }: { pre?: string; accel?: string; post: string; icon?: React.ReactNode; sub?: boolean; active?: boolean }) {
  return (
    <div className={`flex h-[46px] items-center whitespace-nowrap ${active ? "bg-[#efefef]" : ""}`}>
      <span className="flex w-[42px] shrink-0 justify-start pb-[2px]">{icon}</span>
      <span className="pt-[1px] text-[27px] tracking-[0.080px] text-[#101010]">{pre}<span className="inline-block border-b-[1.500px] border-[#101010] leading-[30px]">{accel}</span>{post}</span>
      {sub && <svg className="mr-[9px] ml-auto" width="8" height="16" viewBox="0 0 8 16"><path d="M0 0l8 8-8 8z" fill="#333" /></svg>}
    </div>
  );
}
const Rule = () => <div className="flex h-[6px] items-center pr-[10px] pl-[20px]"><div className="h-[2px] w-full bg-[#424242]" /></div>;

function ContextMenu() {
  return (
    <div className="absolute top-[945px] left-[459px] h-[500px] w-[434px] border-[3px] border-[#202020] bg-[#717171] px-[6px] pt-[7px] shadow-[0_14px_38px_rgba(0,0,0,0.4)]">
      <Item post="Show Feature Count" />
      <Item post="Copy Layer" />
      <Item pre="Re" accel="n" post="ame Layer" />
      <Rule />
      <Item accel="D" post="uplicate Layer" icon={<Icon s={34}><rect x="4" y="8" width="20" height="21" fill="#a5a698" stroke="#555" strokeWidth="1.600" /><g transform="translate(3 -1)"><Sheet /></g><Badge x={18} y={17} s={12} /></Icon>} />
      <Item accel="R" post="emove Layer..." icon={<Icon s={34}><Sheet /><Minus x={19} y={19} /></Icon>} />
      <Rule />
      <Item accel="O" post="pen Attribute Table" icon={<Icon s={34}><g transform="scale(.7)"><Table /></g></Icon>} />
      <Item accel="F" post="ilter..." active />
      <Item post="Change Data Source..." />
      <Rule />
      <Item post="Export" sub />
      <Rule />
      <Item post="Styles" sub />
    </div>
  );
}

/* ---------- App ---------- */

function MenuBar() {
  return (
    <nav className="flex h-[37px] items-start border-b-2 border-[#858585] bg-[#535454] pl-[10px] text-[27px] leading-[30px] font-medium whitespace-nowrap text-white">
      <span className="w-[128px] shrink-0">Project</span>
      <span className="w-[87px] shrink-0">Edit</span>
      <span className="w-[100px] shrink-0">View</span>
      <span className="w-[108px] shrink-0">Layer</span>
      <span className="w-[144px] shrink-0">Settings</span>
      <span className="w-[132px] shrink-0">Plugins</span>
      <span className="w-[121px] shrink-0">Vector</span>
      <span className="w-[121px] shrink-0">Raster</span>
      <span className="w-[160px] shrink-0">Database</span>
      <span className="w-[95px] shrink-0">Web</span>
      <span className="w-[109px] shrink-0">Mesh</span>
      <span className="w-[151px] shrink-0">MMQGIS</span>
      <span className="w-[181px] shrink-0">Processing</span>
      <span className="w-[139px] shrink-0">Window</span>
      <span className="w-[93px] shrink-0">Help</span>
      <svg className="shrink-0" width="71" height="30" viewBox="0 0 71 30" fill="#fff"><path d="M0 1h14l3 6 1-6h9l15 12H12zM12 15h30L27 27H14l3-7-6 7H0z" /><circle cx="75" cy="17" r="14" /></svg>
    </nav>
  );
}

export default function App() {
  return (
    <div className="relative flex h-[1420px] w-[1950px] flex-col overflow-hidden bg-[#c6c8ca] font-['Inter',sans-serif] [-webkit-text-stroke:0.3px]">
      <MenuBar />
      <main className="ml-[17px] flex h-[1368px] w-[1922px] flex-col overflow-hidden rounded-[10px] border-2 border-[#191919] bg-[#727272] shadow-[0_20px_44px_rgba(0,0,0,0.65)]">
        <div className="flex h-[45px] shrink-0 items-center border-t-2 border-b-2 border-t-[#8b8b8b] border-b-[#6c6c6c] bg-linear-to-b from-[#585858] to-[#4e4e4e]">
          <div className="flex w-[160px] gap-[16px] pb-[3px] pl-[15px]"><i className="h-[24px] w-[24px] rounded-full bg-[#fe5b52]" /><i className="h-[24px] w-[24px] rounded-full bg-[#e6c02a]" /><i className="h-[24px] w-[24px] rounded-full bg-[#53c22b]" /></div>
          <div className="flex-1 pr-[163px] pb-[2px] text-center text-[25.800px] leading-[32px] text-[#c4c4c4]">*Untitled Project - QGIS</div>
        </div>
        <div className="flex h-[48px] shrink-0 items-center justify-center border-b-2 border-black bg-linear-to-b from-[#4f4f4f] to-[#454545] pt-[2px] pr-[2px] text-[22.200px] font-medium text-white">*Untitled Project - QGIS</div>
        <TopToolbar />
        <SecondToolbar />
        <div className="flex h-[1055px] shrink-0">
          <div className="flex w-[481px] shrink-0 flex-col"><Browser /><Layers /></div>
          <div className="-mt-[1px] h-[1055px] w-[748px] shrink-0 border-2 border-[#585858] bg-white"><MapCanvas /></div>
          <div className="w-[12px] shrink-0" />
          <Toolbox />
        </div>
        <StatusBar />
      </main>
      <ContextMenu />
      <div className="absolute top-[920px] left-[47px] h-[64px] w-[376px] rounded-[3px] border-[6px] border-[#ff3470]" />
      <div className="absolute top-[1228px] left-[443px] h-[75px] w-[200px] rounded-[3px] border-[6px] border-[#ff3470]" />
    </div>
  );
}
